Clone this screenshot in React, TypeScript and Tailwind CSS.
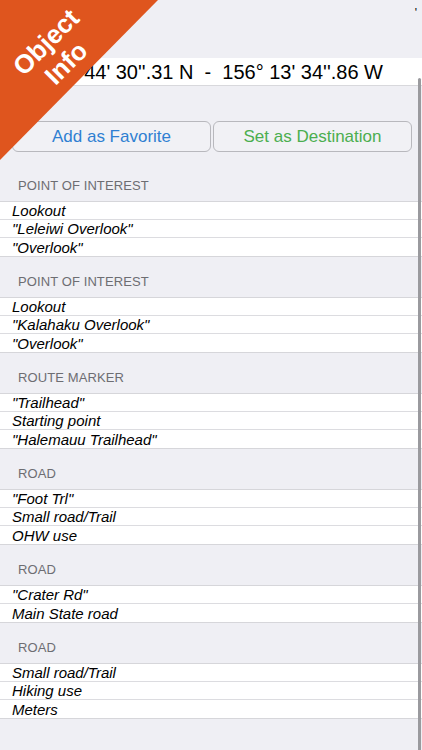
import React from "react";

const sections: { title: string; rows: string[] }[] = [
  { title: "POINT OF INTEREST", rows: ["Lookout", "\"Leleiwi Overlook\"", "\"Overlook\""] },
  { title: "POINT OF INTEREST", rows: ["Lookout", "\"Kalahaku Overlook\"", "\"Overlook\""] },
  { title: "ROUTE MARKER", rows: ["\"Trailhead\"", "Starting point", "\"Halemauu Trailhead\""] },
  { title: "ROAD", rows: ["\"Foot Trl\"", "Small road/Trail", "OHW use"] },
  { title: "ROAD", rows: ["\"Crater Rd\"", "Main State road"] },
  { title: "ROAD", rows: ["Small road/Trail", "Hiking use", "Meters"] },
];

export default function App() {
  return (
    <div
      className="relative w-[422px] h-[750px] overflow-hidden bg-[#efeff4]"
      style={{ fontFamily: "'Liberation Sans', Arial, sans-serif" }}
    >
      <div className="h-[58px] flex justify-end items-start pt-[7px] pr-[5px]">
        <span className="text-[12px] leading-none text-black">'</span>
      </div>
      <div className="h-[28px] bg-white border-b border-[#d8d8dc] flex items-center justify-end pr-[39px]">
        <span className="text-[20px] text-black whitespace-pre leading-none">
          20° 44' 30''.31 N  -  156° 13' 34''.86 W
        </span>
      </div>
      <div className="h-[35px]" />
      <div className="flex gap-[2px] pl-[12px] pr-[10px]">
        <button className="w-[199px] h-[31px] rounded-[6px] border border-[#b8b8bd] bg-[#f1f1f5] text-[#2f7fd2] text-[17px] flex items-center justify-center">
          Add as Favorite
        </button>
        <button className="w-[199px] h-[31px] rounded-[6px] border border-[#b8b8bd] bg-[#f1f1f5] text-[#4bae4f] text-[17px] flex items-center justify-center">
          Set as Destination
        </button>
      </div>
      <div className="h-[9px]" />
      {sections.map((s, i) => (
        <div key={i}>
          <div className="h-[40px] flex items-end pb-[7px] pl-[18px]">
            <span className="text-[13px] leading-[16px] text-[#6d6d72] tracking-[0.1px]">{s.title}</span>
          </div>
          <div className="bg-white border-y border-[#d6d6da]">
            {s.rows.map((r, j) => (
              <div
                key={j}
                className={
                  "h-[18px] flex items-center pl-[12px] " +
                  (j < s.rows.length - 1 ? "border-b border-[#dcdce0]" : "")
                }
              >
                <span className="italic text-[15px] leading-none text-black">{r}</span>
              </div>
            ))}
          </div>
        </div>
      ))}
      {/* scrollbar */}
      <div className="absolute right-[1px] top-[78px] w-[3px] h-[680px] rounded-full bg-[#9a9a9e]" />
      {/* banner */}
      <div className="absolute left-0 top-0 w-[160px] h-[160px] pointer-events-none">
        <svg width="160" height="160" className="absolute left-0 top-0">
          <polygon points="0,0 158,0 0,160" fill="#df551e" />
        </svg>
        <div className="absolute left-[46px] top-[42px] -translate-x-1/2 -translate-y-1/2 -rotate-45 text-white font-bold text-[26px] leading-none whitespace-nowrap">
          Object
        </div>
        <div className="absolute left-[66px] top-[63px] -translate-x-1/2 -translate-y-1/2 -rotate-45 text-white font-bold text-[26px] leading-none whitespace-nowrap">
          Info
        </div>
      </div>
    </div>
  );
}
